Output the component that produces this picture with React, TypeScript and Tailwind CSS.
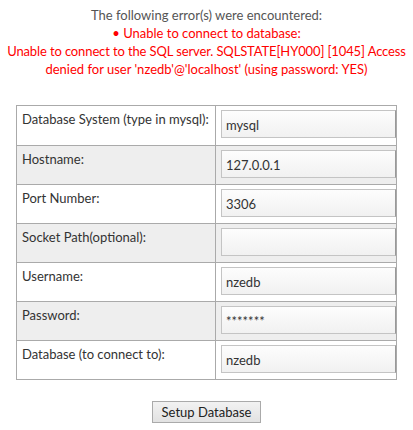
import React from "react";

const FONT = '"Lato", "Open Sans", sans-serif';

const rows = [
  { label: "Database System (type in mysql):", value: "mysql" },
  { label: "Hostname:", value: "127.0.0.1" },
  { label: "Port Number:", value: "3306" },
  { label: "Socket Path(optional):", value: "" },
  { label: "Username:", value: "nzedb" },
  { label: "Password:", value: "*******" },
  { label: "Database (to connect to):", value: "nzedb" },
];

export default function App() {
  return (
    <div
      className="w-[413px] h-[430px] bg-white text-[13px] text-[#333] overflow-hidden"
      style={{ fontFamily: FONT }}
    >
      <div className="pt-[6px] text-center leading-[18px] whitespace-nowrap">
        <div className="text-[#555]">The following error(s) were encountered:</div>
        <div className="text-[#ff0000]">• Unable to connect to database:</div>
        <div className="text-[#ff0000] tracking-[-0.12px]">
          Unable to connect to the SQL server. SQLSTATE[HY000] [1045] Access
        </div>
        <div className="text-[#ff0000]">
          denied for user 'nzedb'@'localhost' (using password: YES)
        </div>
      </div>
      <div className="mt-[27px] mx-auto w-[381px] border border-[#aaa]">
        {rows.map((r, i) => (
          <div
            key={r.label}
            className={`flex h-[39px] ${i > 0 ? "border-t border-[#aaa]" : ""} ${i % 2 === 1 ? "bg-[#eeeeee]" : "bg-white"}`}
          >
            <div className="w-[199px] shrink-0 whitespace-nowrap border-r border-[#aaa] pl-[5px] pt-[4px] leading-[18px] text-[#333]">
              {r.label}
            </div>
            <div className="flex-1 pl-[5px] pt-[4px] overflow-visible">
              <input
                readOnly
                type="text"
                value={r.value}
                className="w-[175px] h-[28px] border border-[#c4c4c4] border-r-[#999] bg-gradient-to-b from-[#fdfdfd] to-[#f1f1f1] px-[4px] pt-[2px] text-[13px] text-[#333] outline-none"
                style={{ fontFamily: FONT }}
              />
            </div>
          </div>
        ))}
      </div>
      <div className="mt-[21px] flex justify-center">
        <button
          className="w-[109px] h-[22px] border border-[#aaa] bg-gradient-to-b from-[#f2f2f2] to-[#e2e2e2] text-[13px] text-[#222] leading-[20px]"
          style={{ fontFamily: FONT }}
        >
          Setup Database
        </button>
      </div>
    </div>
  );
}
